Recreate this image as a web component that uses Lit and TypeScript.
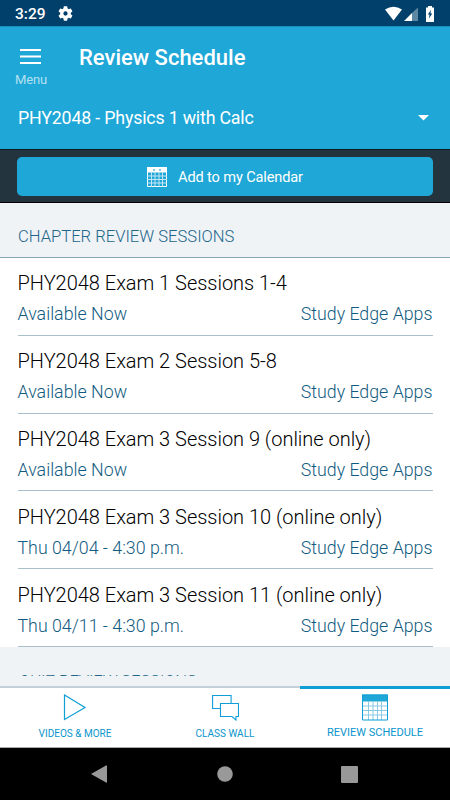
import { LitElement, html, css, svg } from "lit";
import { customElement } from "lit/decorators.js";

interface Session {
  title: string;
  when: string;
  place: string;
}

const place = "Study Edge Apps";
const sessions: Session[] = [
  { title: "PHY2048 Exam 1 Sessions 1-4", when: "Available Now", place },
  { title: "PHY2048 Exam 2 Session 5-8", when: "Available Now", place },
  { title: "PHY2048 Exam 3 Session 9 (online only)", when: "Available Now", place },
  { title: "PHY2048 Exam 3 Session 10 (online only)", when: "Thu 04/04 - 4:30 p.m.", place },
  { title: "PHY2048 Exam 3 Session 11 (online only)", when: "Thu 04/11 - 4:30 p.m.", place },
];

const gear = svg`<path fill="#fff" fill-rule="evenodd" d="M19.43 12.98c.04-.32.07-.64.07-.98s-.03-.66-.07-.98l2.11-1.65c.19-.15.24-.42.12-.64l-2-3.46c-.12-.22-.39-.3-.61-.22l-2.49 1c-.52-.4-1.08-.73-1.69-.98l-.38-2.65C14.46 2.18 14.25 2 14 2h-4c-.25 0-.46.18-.49.42l-.38 2.65c-.61.25-1.17.59-1.69.98l-2.49-1c-.23-.09-.49 0-.61.22l-2 3.46c-.13.22-.07.49.12.64l2.11 1.65c-.04.32-.07.65-.07.98s.03.66.07.98l-2.11 1.65c-.19.15-.24.42-.12.64l2 3.46c.12.22.39.3.61.22l2.49-1c.52.4 1.08.73 1.69.98l.38 2.65c.03.24.24.42.49.42h4c.25 0 .46-.18.49-.42l.38-2.65c.61-.25 1.17-.59 1.69-.98l2.49 1c.23.09.49 0 .61-.22l2-3.46c.12-.22.07-.49-.12-.64l-2.11-1.65zM12 15a3 3 0 1 1 0-6 3 3 0 0 1 0 6z"/>`;

@customElement("app-root")
export class AppRoot extends LitElement {
  static styles = css`
    :host {
      display: flex;
      flex-direction: column;
      width: 450px;
      height: 800px;
      overflow: hidden;
      background: #fff;
      font-family: Roboto, "Liberation Sans", sans-serif;
      white-space: nowrap;
    }
    * { box-sizing: border-box; }
    svg { display: block; flex: none; }
    .status {
      height: 26px;
      flex: none;
      display: flex;
      align-items: center;
      padding: 1px 15px 0 15px;
      background: #00406b;
      color: #fff;
      font-size: 15.5px;
      font-weight: 500;
      line-height: 24px;
    }
    .gear { width: 15px; height: 15px; margin: 0 0 1px 12px; }
    .signals { margin-left: auto; }
    .header {
      height: 123px;
      flex: none;
      background: #1ea7d7;
      border-top: 1px solid #178fbd;
      color: #fff;
    }
    .bar { display: flex; height: 68px; }
    .menu {
      width: 79px;
      flex: none;
      padding: 22px 0 0 15px;
      font-size: 13px;
      line-height: 16px;
      color: #b4e0f2;
      letter-spacing: -0.1px;
    }
    .lines { margin: 0 0 8px 5px; }
    h1 {
      margin: 16px 0 0;
      font-size: 22px;
      font-weight: 500;
      line-height: 30px;
    }
    .course {
      display: flex;
      align-items: center;
      justify-content: space-between;
      height: 45px;
      padding: 0 21px 0 18px;
      font-size: 17.8px;
      letter-spacing: -0.18px;
    }
    .caret { margin-top: 1px; }
    .actions {
      height: 54px;
      flex: none;
      padding: 7px 17px 0;
      background: #24343e;
      border-top: 1px solid #111c20;
      border-bottom: 1px solid #000;
    }
    .add {
      display: flex;
      align-items: center;
      justify-content: center;
      gap: 11px;
      width: 416px;
      height: 39px;
      padding: 0;
      border: 0;
      border-radius: 5px;
      background: #1ea7d7;
      color: #fff;
      font: 400 14.6px Roboto, "Liberation Sans", sans-serif;
      letter-spacing: -0.14px;
    }
    .heading {
      height: 55px;
      flex: none;
      margin: 0;
      padding: 23px 18px 0;
      background: #eff3f6;
      border-bottom: 1px solid #87a6b6;
      color: #22668a;
      font-size: 16.6px;
      font-weight: 300;
      line-height: 22px;
    }
    .rows { height: 389px; flex: none; padding: 0 17px 0 17.5px; }
    .row {
      height: 77.8px;
      padding-top: 11.4px;
      border-bottom: 1px solid #a9bfca;
    }
    .title { color: #000; font-size: 20px; font-weight: 300; line-height: 28px; letter-spacing: -0.02px; }
    .detail {
      display: flex;
      justify-content: space-between;
      padding: 4px 0.5px 0 0;
      color: #125b80;
      font-size: 17.8px;
      font-weight: 300;
      line-height: 26px;
    }
    .next { height: 39px; flex: none; background: #eff3f6; }
    .peek {
      height: 29px;
      padding: 24px 19px 0;
      overflow: hidden;
      color: #22668a;
      font-size: 16.6px;
      font-weight: 300;
      line-height: 22px;
      letter-spacing: -0.1px;
    }
    .tabs {
      display: grid;
      grid-template-columns: repeat(3, 150px);
      height: 62px;
      flex: none;
      border-bottom: 1px solid #aaa;
      color: #0995cc;
      font-size: 10px;
    }
    .tab {
      display: flex;
      flex-direction: column;
      align-items: center;
      border-top: 2px solid #c3d0da;
      line-height: 14px;
    }
    .tab svg { margin: 6px 0 6px; }
    .tab.active { border-top: 3px solid #0f9fd6; font-size: 11px; }
    .tab.active svg { margin: 5px 0; }
    .system {
      display: flex;
      justify-content: space-between;
      align-items: center;
      height: 52px;
      flex: none;
      padding: 0 92px 0 91px;
      background: #000;
    }
    .home { margin-left: 1px; }
  `;

  render() {
    return html`
      <div class="status">
        <span>3:29</span>
        <svg class="gear" width="16" height="16" viewBox="1.5 1.5 21 21">${gear}</svg>
        <svg class="signals" width="50" height="16" viewBox="385 5 50 16">
          <path fill="#fff" d="M385 8.5q8.5-5.500 17 0L393.500 19.500z" />
          <path fill="#fff" d="M404 20L412 12v8z" />
          <path fill="#5d88a4" d="M412 12L418 6.5V20h-6z" />
          <path fill="#fff" d="M428 5h4v1.500h2V21h-8V6.500h2z" />
          <path fill="#00406b" d="M431 9L427.800 13.500h1.700l-.5 4L432.300 12.500h-1.800z" />
        </svg>
      </div>
      <header class="header">
        <div class="bar">
          <div class="menu">
            <svg class="lines" width="21" height="15" viewBox="0 0 21 15">
              <path stroke="#fff" stroke-width="2" d="M0 1h21M0 7.500h21M0 14h21" />
            </svg>
            Menu
          </div>
          <h1>Review Schedule</h1>
        </div>
        <div class="course">
          <span>PHY2048 - Physics 1 with Calc</span>
          <svg class="caret" width="11" height="6" viewBox="0 0 11 6"><path fill="#fff" d="M0 0h11L5.500 5.500z" /></svg>
        </div>
      </header>
      <div class="actions">
        <button class="add">
          <svg width="20" height="20" viewBox="0 0 20 20">
            <path fill="#fff" d="M0 0h20v5.500H0z" />
            <path fill="none" stroke="#fff" d="M.5.5h19v19H.5z" />
            <path fill="none" stroke="#c3e6f4" d="M4.500 5v15M8 5v15M12 5v15M15.500 5v15M0 9h20M0 12.500h20M0 16h20" />
            <path fill="#7fcbe7" d="M6 2h2v2H6zM12 2h2v2h-2z" />
          </svg>
          <span>Add to my Calendar</span>
        </button>
      </div>
      <h2 class="heading">CHAPTER REVIEW SESSIONS</h2>
      <div class="rows">
        ${sessions.map(
          (s) => html`
            <div class="row">
              <div class="title">${s.title}</div>
              <div class="detail"><span>${s.when}</span><span>${s.place}</span></div>
            </div>
          `
        )}
      </div>
      <div class="next"><div class="peek">QUIZ REVIEW SESSIONS</div></div>
      <nav class="tabs">
        <div class="tab">
          <svg width="24" height="27" viewBox="0 0 24 27">
            <path fill="none" stroke="#0f9fd6" stroke-width="1.200" d="M1.500 1v24.500L22 13.500z" />
          </svg>
          <span>VIDEOS &amp; MORE</span>
        </div>
        <div class="tab">
          <svg width="27" height="27" viewBox="0 0 27 27">
            <path fill="none" stroke="#0f9fd6" stroke-width="1.100" d="M8 14.500H.6v-13h18.500V9M8.500 9.500h18v13H24V26l-4-3.500H8.500z" />
          </svg>
          <span>CLASS WALL</span>
        </div>
        <div class="tab active">
          <svg width="26" height="27" viewBox="0 0 26 27">
            <path fill="#1ea7d7" d="M0 .5h26v7H0z" />
            <path fill="none" stroke="#8acae5" d="M6.500 7v19M11 7v19M15.500 7v19M19.500 7v19M0 12h26M0 16.500h26M0 21h26" />
            <path fill="none" stroke="#0f9fd6" d="M.5 1h25v25H.5z" />
          </svg>
          <span>REVIEW SCHEDULE</span>
        </div>
      </nav>
      <div class="system">
        <svg width="16" height="18" viewBox="0 0 16 18"><path fill="#999" d="M16 .8v16.400Q16 18 15 17.500L0 9 15 .5Q16 0 16 .8z" /></svg>
        <svg class="home" width="16" height="16" viewBox="0 0 16 16"><circle cx="8" cy="8" r="7.800" fill="#999" /></svg>
        <svg width="17" height="17" viewBox="0 0 17 17"><rect width="17" height="17" rx="1" fill="#999" /></svg>
      </div>
    `;
  }
}
